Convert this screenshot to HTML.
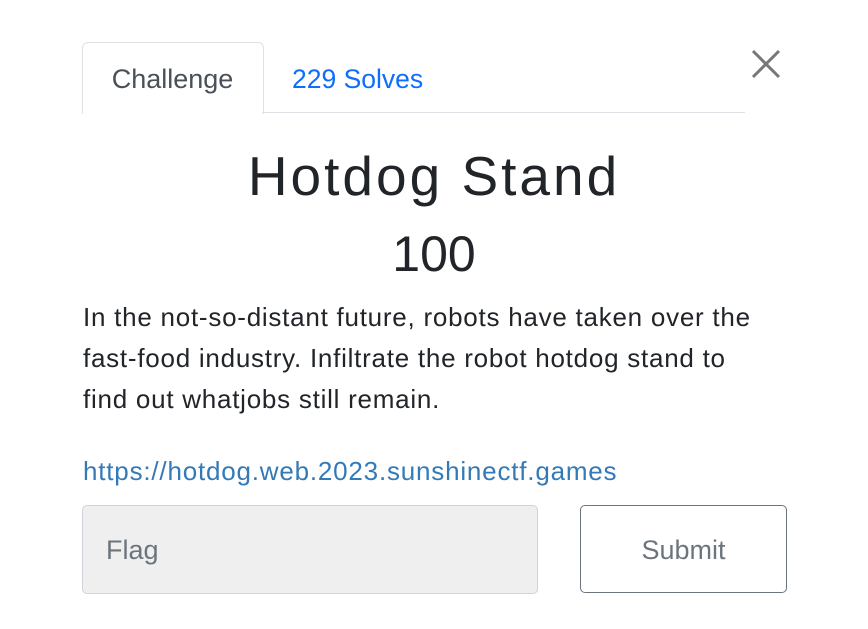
<!DOCTYPE html>
<html><head><style>
body{margin:0;width:868px;height:629px;background:#fff;font-family:"Liberation Sans",sans-serif;position:relative;overflow:hidden;color:#212529}
.a{position:absolute;white-space:nowrap}
</style></head><body>
<div class="a" style="left:82px;top:42px;width:180px;height:71px;border:1px solid #dee2e6;border-bottom:none;border-radius:6px 6px 0 0;background:#fff"></div>
<div class="a" style="left:262px;top:112px;width:483px;height:1px;background:#dee2e6"></div>
<div class="a" style="left:82px;top:62px;width:181px;text-align:center;font-size:27px;color:#495057;line-height:34px">Challenge</div>
<div class="a" style="left:292px;top:62px;font-size:26.5px;color:#0d6efd;line-height:34px">229 Solves</div>
<svg class="a" style="left:750px;top:48px" width="32" height="32" viewBox="0 0 32 32"><path d="M3 3L29 29M29 3L3 29" stroke="#777" stroke-width="3"/></svg>
<div class="a" style="left:0;width:868px;top:144px;text-align:center;font-size:55px;letter-spacing:3px;line-height:64px">Hotdog Stand</div>
<div class="a" style="left:0;width:868px;top:226px;text-align:center;font-size:50px;line-height:56px">100</div>
<div class="a" style="left:83px;top:297px;font-size:26px;letter-spacing:0.75px;line-height:41px;white-space:normal;width:780px">In the not-so-distant future, robots have taken over the<br>fast-food industry. Infiltrate the robot hotdog stand to<br>find out whatjobs still remain.</div>
<div class="a" style="left:83px;top:455px;font-size:26px;letter-spacing:0.8px;color:#337ab7;line-height:32px">https://hotdog.web.2023.sunshinectf.games</div>
<div class="a" style="left:82px;top:505px;width:454px;height:87px;background:#efefef;border:1px solid #ced4da;border-radius:5px"></div>
<div class="a" style="left:106px;top:534px;font-size:27px;color:#6c757d;line-height:32px">Flag</div>
<div class="a" style="left:580px;top:505px;width:207px;height:88px;border:1px solid #6c757d;border-radius:5px;box-sizing:border-box;text-align:center;line-height:88px;font-size:27px;color:#6c757d">Submit</div>
</body></html>
